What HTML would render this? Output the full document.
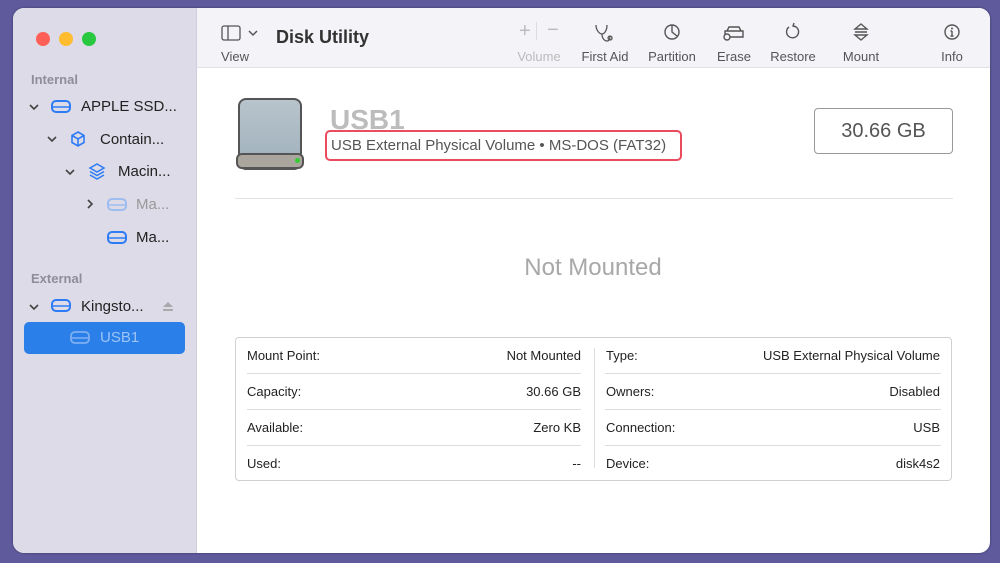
<!DOCTYPE html>
<html><head><meta charset="utf-8"><style>
*{margin:0;padding:0;box-sizing:border-box}
body{width:1000px;height:563px;background:#5e5a9c;font-family:"Liberation Sans",sans-serif;position:relative;overflow:hidden}
.win{position:absolute;left:13px;top:8px;width:977px;height:545px;background:#fff;border-radius:11px;overflow:hidden;box-shadow:0 0 2px rgba(0,0,0,.4)}
.side{position:absolute;left:0;top:0;width:184px;height:100%;background:#dcdbe7;border-right:1px solid #cfcedb}
.tb{position:absolute;left:184px;top:0;right:0;height:60px;background:#f4f3f7;border-bottom:1px solid #e2e1e6}
.a{position:absolute;white-space:nowrap}
.dot{position:absolute;top:24px;width:14px;height:14px;border-radius:50%}
.sec{font-size:13px;color:#8e8d99;font-weight:bold}
.it{font-size:15px;color:#222}
.tl{font-size:13px;color:#555;text-align:center;width:80px}
.k{font-size:13px;color:#222}
.hl{position:absolute;height:1px;background:#dcdcdc}
svg{position:absolute}
</style></head><body>
<div class="win">
<div class="side">
 <div class="dot" style="left:23px;background:#fe5f57"></div>
 <div class="dot" style="left:46px;background:#febc2e"></div>
 <div class="dot" style="left:69px;background:#28c840"></div>
 <div class="a sec" style="left:18px;top:64px">Internal</div>
 <div class="a sec" style="left:18px;top:263px">External</div>
 <svg style="left:15px;top:94px" width="12" height="10"><path d="M2 3l4 4 4-4" stroke="#444" stroke-width="1.6" fill="none"/></svg>
 <svg style="left:37px;top:91px" width="22" height="16"><rect x="2" y="2" width="18" height="11" rx="4" stroke="#2d7cf6" stroke-width="2" fill="none"/><line x1="2" y1="8" x2="20" y2="8" stroke="#2d7cf6" stroke-width="1.6"/></svg>
 <div class="a it" style="left:68px;top:90px">APPLE SSD...</div>
 <svg style="left:33px;top:126px" width="12" height="10"><path d="M2 3l4 4 4-4" stroke="#444" stroke-width="1.6" fill="none"/></svg>
 <svg style="left:56px;top:122px" width="18" height="18"><path d="M9 2l6 3.5v7L9 16l-6-3.5v-7z M3 5.5L9 9l6-3.5 M9 9v7" stroke="#2d7cf6" stroke-width="1.6" fill="none"/></svg>
 <div class="a it" style="left:87px;top:123px">Contain...</div>
 <svg style="left:51px;top:159px" width="12" height="10"><path d="M2 3l4 4 4-4" stroke="#444" stroke-width="1.6" fill="none"/></svg>
 <svg style="left:75px;top:154px" width="18" height="18"><path d="M9 2l7 4-7 4-7-4z M2 9.5l7 4 7-4 M2 13l7 4 7-4" stroke="#2d7cf6" stroke-width="1.5" fill="none"/></svg>
 <div class="a it" style="left:105px;top:155px">Macin...</div>
 <svg style="left:72px;top:190px" width="10" height="12"><path d="M3 2l4 4-4 4" stroke="#444" stroke-width="1.6" fill="none"/></svg>
 <svg style="left:93px;top:189px" width="22" height="16"><rect x="2" y="2" width="18" height="11" rx="4" stroke="#9dbcf0" stroke-width="2" fill="none"/><line x1="2" y1="8" x2="20" y2="8" stroke="#9dbcf0" stroke-width="1.6"/></svg>
 <div class="a it" style="left:123px;top:188px;color:#999">Ma...</div>
 <svg style="left:93px;top:222px" width="22" height="16"><rect x="2" y="2" width="18" height="11" rx="4" stroke="#2d7cf6" stroke-width="2" fill="none"/><line x1="2" y1="8" x2="20" y2="8" stroke="#2d7cf6" stroke-width="1.6"/></svg>
 <div class="a it" style="left:123px;top:221px">Ma...</div>
 <svg style="left:15px;top:294px" width="12" height="10"><path d="M2 3l4 4 4-4" stroke="#444" stroke-width="1.6" fill="none"/></svg>
 <svg style="left:37px;top:290px" width="22" height="16"><rect x="2" y="2" width="18" height="11" rx="4" stroke="#2d7cf6" stroke-width="2" fill="none"/><line x1="2" y1="8" x2="20" y2="8" stroke="#2d7cf6" stroke-width="1.6"/></svg>
 <div class="a it" style="left:68px;top:290px">Kingsto...</div>
 <svg style="left:149px;top:292px" width="12" height="12"><path d="M1 7l5-5 5 5z" fill="#aaa"/><rect x="1" y="9" width="10" height="2" fill="#aaa"/></svg>
 <div class="a" style="left:11px;top:314px;width:161px;height:32px;background:#2b7fe8;border-radius:5px"></div>
 <svg style="left:56px;top:322px" width="22" height="16"><rect x="2" y="2" width="18" height="11" rx="4" stroke="#7fb0f0" stroke-width="1.8" fill="none"/><line x1="2" y1="8" x2="20" y2="8" stroke="#7fb0f0" stroke-width="1.4"/></svg>
 <div class="a it" style="left:87px;top:321px;color:#9cc4f5">USB1</div>
</div>
<div class="tb">
 <svg style="left:24px;top:17px" width="20" height="16"><rect x="1" y="1" width="18" height="14" rx="2" stroke="#555" stroke-width="1.3" fill="none"/><line x1="7" y1="1" x2="7" y2="15" stroke="#555" stroke-width="1.3"/></svg>
 <svg style="left:50px;top:20px" width="12" height="10"><path d="M2 3l4 4 4-4" stroke="#555" stroke-width="1.5" fill="none"/></svg>
 <div class="a tl" style="left:-2px;top:41px">View</div>
 <div class="a" style="left:79px;top:19px;font-size:18px;font-weight:bold;color:#333">Disk Utility</div>
 <div class="a" style="left:322px;top:12px;font-size:20px;color:#bbb">+</div>
 <div class="a" style="left:339px;top:14px;width:1px;height:18px;background:#ddd"></div>
 <div class="a" style="left:350px;top:11px;font-size:20px;color:#bbb">−</div>
 <div class="a tl" style="left:302px;top:41px;color:#bbb">Volume</div>
 <svg style="left:397px;top:15px" width="22" height="20"><path d="M2 2c0 6 4 9 6 9s5-3 5-9 M8 11c0 5 3 7 5 7s3-2 3-5 M16 13a2 2 0 1 0 .1 0" stroke="#555" stroke-width="1.3" fill="none"/></svg>
 <div class="a tl" style="left:368px;top:41px">First Aid</div>
 <svg style="left:466px;top:15px" width="18" height="18"><circle cx="9" cy="9" r="7" stroke="#555" stroke-width="1.4" fill="none"/><path d="M9 2v7l5 4" stroke="#555" stroke-width="1.4" fill="none"/></svg>
 <div class="a tl" style="left:435px;top:41px">Partition</div>
 <svg style="left:525px;top:17px" width="24" height="16"><path d="M5 6l2-4h10l2 4 M3 6h18v6H3z" stroke="#555" stroke-width="1.4" fill="none"/><circle cx="5" cy="12" r="3" fill="#f4f3f7" stroke="#555" stroke-width="1.4"/></svg>
 <div class="a tl" style="left:497px;top:41px">Erase</div>
 <svg style="left:587px;top:14px" width="18" height="20"><path d="M5 5a6 6 0 1 0 5-1 M10 1l-1 3 3 1" stroke="#555" stroke-width="1.4" fill="none"/></svg>
 <div class="a tl" style="left:556px;top:41px">Restore</div>
 <svg style="left:656px;top:14px" width="16" height="20"><path d="M2 7l6-5 6 5z M2 13l6 5 6-5z M2 10h12" stroke="#555" stroke-width="1.4" fill="none"/></svg>
 <div class="a tl" style="left:624px;top:41px">Mount</div>
 <svg style="left:746px;top:15px" width="18" height="18"><circle cx="9" cy="9" r="7" stroke="#555" stroke-width="1.4" fill="none"/><path d="M9 8v5 M7.5 13h3 M7.5 8H9" stroke="#555" stroke-width="1.4"/><circle cx="9" cy="5.5" r="1" fill="#555"/></svg>
 <div class="a tl" style="left:715px;top:41px">Info</div>
</div>
<!-- content -->
<div class="a" style="left:225px;top:90px;width:64px;height:72px;border-radius:8px;background:linear-gradient(#b8c4cc,#9fb0bb);border:2px solid #555"></div>
<div class="a" style="left:223px;top:145px;width:68px;height:16px;border-radius:6px;background:#aaa69e;border:2px solid #555"></div>
<div class="a" style="left:282px;top:150px;width:5px;height:5px;border-radius:50%;background:#3c3"></div>
<div class="a" style="left:317px;top:96px;font-size:28px;font-weight:bold;color:#bcbcbc">USB1</div>
<div class="a" style="left:312px;top:122px;width:357px;height:31px;border:2.5px solid #ea4c5d;border-radius:5px"></div>
<div class="a" style="left:318px;top:129px;font-size:15px;color:#555">USB External Physical Volume • MS-DOS (FAT32)</div>
<div class="a" style="left:801px;top:100px;width:139px;height:46px;border:1px solid #999;border-radius:4px;font-size:20px;color:#555;text-align:center;line-height:44px">30.66 GB</div>
<div class="hl" style="left:222px;top:190px;width:718px;background:#e3e3e3"></div>
<div class="a" style="left:0;width:1160px;top:246px;text-align:center;font-size:24px;color:#a8a8a8">Not Mounted</div>
<div class="a" style="left:222px;top:329px;width:717px;height:144px;border:1px solid #d0d0d0;border-radius:4px"></div>
<div class="a" style="left:581px;top:340px;width:1px;height:120px;background:#ddd"></div>
<div class="hl" style="left:234px;top:365px;width:334px"></div><div class="hl" style="left:234px;top:401px;width:334px"></div><div class="hl" style="left:234px;top:437px;width:334px"></div>
<div class="hl" style="left:592px;top:365px;width:336px"></div><div class="hl" style="left:592px;top:401px;width:336px"></div><div class="hl" style="left:592px;top:437px;width:336px"></div>
<div class="a k" style="left:234px;top:340px">Mount Point:</div><div class="a k" style="right:409px;top:340px">Not Mounted</div>
<div class="a k" style="left:234px;top:376px">Capacity:</div><div class="a k" style="right:409px;top:376px">30.66 GB</div>
<div class="a k" style="left:234px;top:412px">Available:</div><div class="a k" style="right:409px;top:412px">Zero KB</div>
<div class="a k" style="left:234px;top:448px">Used:</div><div class="a k" style="right:409px;top:448px">--</div>
<div class="a k" style="left:593px;top:340px">Type:</div><div class="a k" style="right:50px;top:340px">USB External Physical Volume</div>
<div class="a k" style="left:593px;top:376px">Owners:</div><div class="a k" style="right:50px;top:376px">Disabled</div>
<div class="a k" style="left:593px;top:412px">Connection:</div><div class="a k" style="right:50px;top:412px">USB</div>
<div class="a k" style="left:593px;top:448px">Device:</div><div class="a k" style="right:50px;top:448px">disk4s2</div>
</div>
</body></html>
